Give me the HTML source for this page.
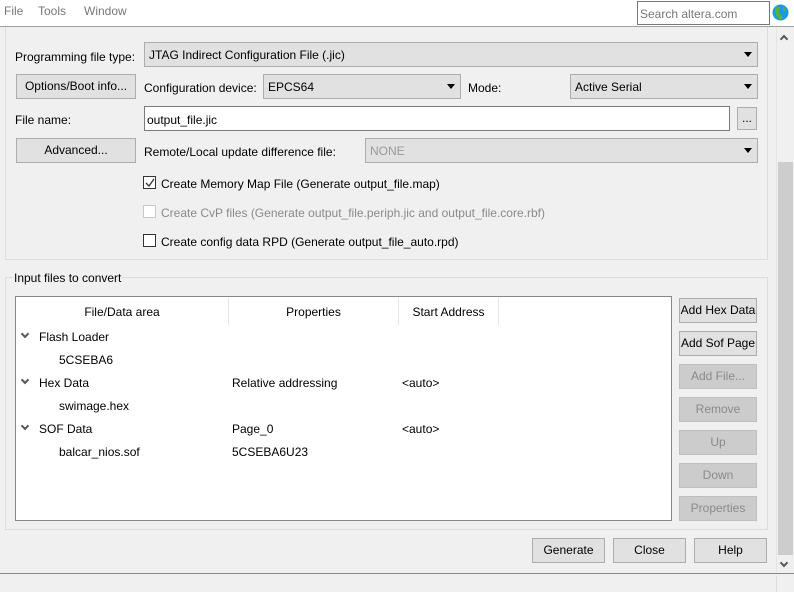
<!DOCTYPE html>
<html><head><meta charset="utf-8"><style>
*{box-sizing:border-box;margin:0;padding:0}
body{width:794px;height:592px;background:#f0f0f0;font-family:"Liberation Sans",sans-serif;font-size:12px;color:#000;position:relative;overflow:hidden}
.a{position:absolute;white-space:nowrap}
.btn{position:absolute;background:#e1e1e1;border:1px solid #adadad;text-align:center;line-height:23px}
.dis{color:#8a8a8a;background:#cccccc;border-color:#bfbfbf}
.cmb{position:absolute;background:#e1e1e1;border:1px solid #adadad;line-height:25px;padding-left:4px}
.cmb:after{content:"";position:absolute;right:5px;top:9px;border-left:4px solid transparent;border-right:4px solid transparent;border-top:5px solid #000}
.grp{position:absolute;border:1px solid #dcdcdc}
.cb{position:absolute;width:13px;height:13px;border:1px solid #333;background:#fff}
.hd{position:absolute;top:1px;height:27px;line-height:29px;text-align:center;border-right:1px solid #e5e5e5}
.chev{position:absolute;width:6px;height:6px;border-right:2px solid #555;border-bottom:2px solid #555;transform:rotate(45deg)}
</style></head><body>
<div class="grp" style="left:5px;top:20px;width:763px;height:240px;border-top:none"></div>
<div class="a" style="left:0;top:0;width:794px;height:27px;background:#fff;border-bottom:1px solid #a0a0a0"></div>
<div class="a" style="left:4px;top:4px;color:#777">File</div>
<div class="a" style="left:38px;top:4px;color:#777">Tools</div>
<div class="a" style="left:84px;top:4px;color:#777">Window</div>
<div class="a" style="left:637px;top:1px;width:133px;height:24px;border:1px solid #777;background:#fff;color:#777;padding:5px 0 0 2px">Search altera.com</div>
<svg class="a" style="left:772px;top:4px" width="17" height="17" viewBox="0 0 17 17"><circle cx="8.5" cy="8.5" r="8" fill="#1a9be0"/><path d="M4 3c2-1 4 0 4 2s-2 2-1 4 3 1 3 4-2 3-3 3c0-2-1-3-2-4S3 9 3 7s0-3 1-4z" fill="#5cb13a"/><path d="M11 3c2 1 3 3 2 4s-2 0-2-1 0-2 0-3z" fill="#5cb13a"/></svg>

<div class="a" style="left:15px;top:50px">Programming file type:</div>
<div class="cmb" style="left:144px;top:42px;width:614px;height:25px">JTAG Indirect Configuration File (.jic)</div>
<div class="btn" style="left:16px;top:74px;width:120px;height:25px">Options/Boot info...</div>
<div class="a" style="left:144px;top:81px">Configuration device:</div>
<div class="cmb" style="left:263px;top:74px;width:198px;height:25px">EPCS64</div>
<div class="a" style="left:468px;top:81px">Mode:</div>
<div class="cmb" style="left:570px;top:74px;width:188px;height:25px">Active Serial</div>
<div class="a" style="left:15px;top:113px">File name:</div>
<div class="a" style="left:144px;top:106px;width:586px;height:25px;background:#fff;border:1px solid #7a7a7a;padding:6px 0 0 2px">output_file.jic</div>
<div class="btn" style="left:737px;top:107px;width:20px;height:23px;line-height:20px">...</div>
<div class="btn" style="left:16px;top:138px;width:120px;height:25px">Advanced...</div>
<div class="a" style="left:144px;top:145px">Remote/Local update difference file:</div>
<div class="cmb dis" style="left:365px;top:138px;width:393px;height:25px;color:#999">NONE</div>
<div class="cb" style="left:143px;top:176px"></div>
<svg class="a" style="left:145px;top:178px" width="10" height="10"><path d="M1 5l3 3 5-7" stroke="#333" stroke-width="1.3" fill="none"/></svg>
<div class="a" style="left:161px;top:177px">Create Memory Map File (Generate output_file.map)</div>
<div class="cb" style="left:143px;top:205px;border-color:#c8c8c8"></div>
<div class="a" style="left:161px;top:206px;color:#8a8a8a">Create CvP files (Generate output_file.periph.jic and output_file.core.rbf)</div>
<div class="cb" style="left:143px;top:234px"></div>
<div class="a" style="left:161px;top:235px">Create config data RPD (Generate output_file_auto.rpd)</div>

<div class="grp" style="left:5px;top:277px;width:763px;height:253px"></div>
<div class="a" style="left:13px;top:271px;background:#f0f0f0;padding:0 1px">Input files to convert</div>
<div class="a" style="left:15px;top:296px;width:657px;height:225px;background:#fff;border:1px solid #888"></div>
<div class="hd" style="left:16px;width:213px;top:298px">File/Data area</div>
<div class="hd" style="left:229px;width:170px;top:298px">Properties</div>
<div class="hd" style="left:399px;width:100px;top:298px">Start Address</div>
<div class="chev" style="left:22px;top:331px"></div>
<div class="a" style="left:39px;top:330px">Flash Loader</div>
<div class="a" style="left:59px;top:353px">5CSEBA6</div>
<div class="chev" style="left:22px;top:377px"></div>
<div class="a" style="left:39px;top:376px">Hex Data</div>
<div class="a" style="left:232px;top:376px">Relative addressing</div>
<div class="a" style="left:402px;top:376px">&lt;auto&gt;</div>
<div class="a" style="left:59px;top:399px">swimage.hex</div>
<div class="chev" style="left:22px;top:423px"></div>
<div class="a" style="left:39px;top:422px">SOF Data</div>
<div class="a" style="left:232px;top:422px">Page_0</div>
<div class="a" style="left:402px;top:422px">&lt;auto&gt;</div>
<div class="a" style="left:59px;top:445px">balcar_nios.sof</div>
<div class="a" style="left:232px;top:445px">5CSEBA6U23</div>

<div class="btn" style="left:679px;top:298px;width:78px;height:25px">Add Hex Data</div>
<div class="btn" style="left:679px;top:331px;width:78px;height:25px">Add Sof Page</div>
<div class="btn dis" style="left:679px;top:364px;width:78px;height:25px">Add File...</div>
<div class="btn dis" style="left:679px;top:397px;width:78px;height:25px">Remove</div>
<div class="btn dis" style="left:679px;top:430px;width:78px;height:25px">Up</div>
<div class="btn dis" style="left:679px;top:463px;width:78px;height:25px">Down</div>
<div class="btn dis" style="left:679px;top:496px;width:78px;height:25px">Properties</div>

<div class="btn" style="left:532px;top:538px;width:73px;height:25px">Generate</div>
<div class="btn" style="left:613px;top:538px;width:73px;height:25px">Close</div>
<div class="btn" style="left:694px;top:538px;width:73px;height:25px">Help</div>

<div class="a" style="left:776px;top:28px;width:1px;height:545px;background:#e4e4e4"></div>
<div class="a" style="left:778px;top:162px;width:15px;height:393px;background:#cdcdcd"></div>
<div class="a" style="left:781px;top:36px;width:6px;height:6px;border-left:2px solid #555;border-top:2px solid #555;transform:rotate(45deg)"></div>
<div class="a" style="left:781px;top:560px;width:6px;height:6px;border-right:2px solid #555;border-bottom:2px solid #555;transform:rotate(45deg)"></div>
<div class="a" style="left:0;top:573px;width:794px;height:1px;background:#8a8a8a"></div>
<div class="a" style="left:776px;top:576px;width:1px;height:16px;background:#dcdcdc"></div>
</body></html>
